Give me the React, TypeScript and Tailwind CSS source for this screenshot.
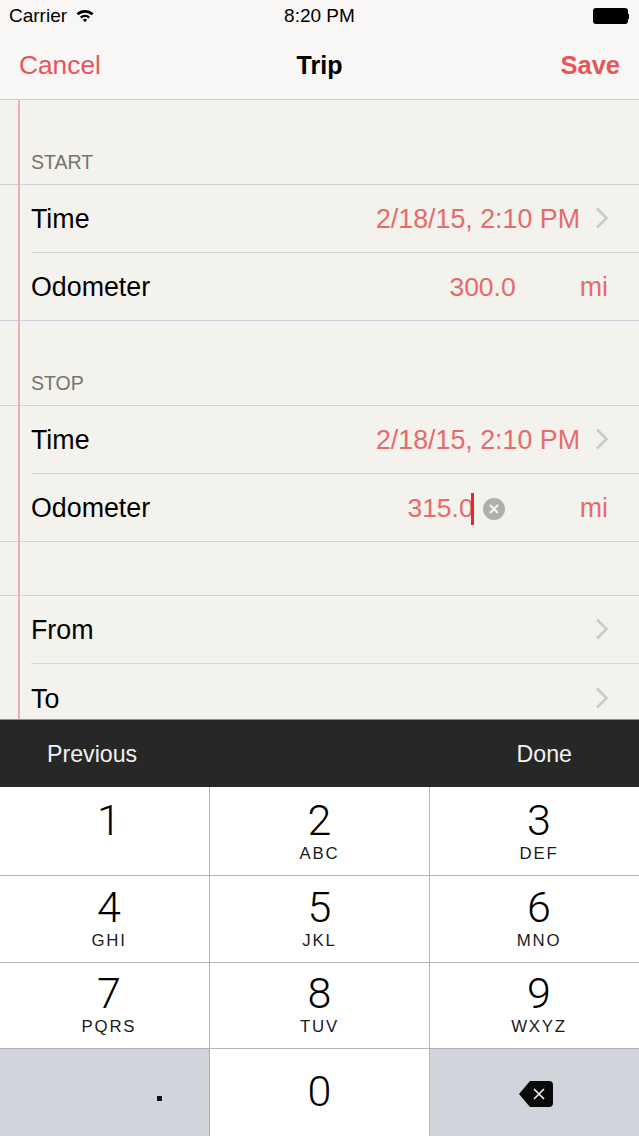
import React from 'react';

function Chevron() {
  return (
    <svg width="14" height="22" viewBox="0 0 14 22" className="shrink-0 -mt-[3px]">
      <path d="M2 1.5 L11.5 11 L2 20.5" fill="none" stroke="#cbcac7" strokeWidth="2.6" />
    </svg>
  );
}

function SectionLabel({ text }: { text: string }) {
  return (
    <div className="flex items-end h-[85px] pl-[31px] pb-[10px] border-b border-[#d3d0de] text-[19.5px] leading-[24px] text-[#75746f]">
      {text}
    </div>
  );
}

function TimeRow({ value }: { value: string }) {
  return (
    <div className="ml-[31px] h-[68px] pt-[2px] flex items-center border-b border-[#d8d6dd] pr-[30px]">
      <span className="text-[26.8px] text-black">Time</span>
      <span className="ml-auto text-[26.8px] text-[#e56b6b]">{value}</span>
      <span className="ml-[15px]"><Chevron /></span>
    </div>
  );
}

function OdometerRow({ children }: { children: React.ReactNode }) {
  return (
    <div className="h-[68px] pt-[2px] flex items-center border-b border-[#d3d0de] pl-[31px] pr-[31px]">
      <span className="text-[26.8px] text-black">Odometer</span>
      {children}
      <span className="text-[26.8px] text-[#e56b6b]">mi</span>
    </div>
  );
}

function LinkRow({ label, line }: { label: string; line: boolean }) {
  return (
    <div className={`ml-[31px] h-[68px] pt-[2px] shrink-0 flex items-center justify-between pr-[30px] ${line ? 'border-b border-[#d8d6dd]' : ''}`}>
      <span className="text-[26.8px] text-black">{label}</span>
      <Chevron />
    </div>
  );
}

function Key({ num, letters, className }: { num: string; letters?: string; className: string }) {
  return (
    <div className={`flex flex-col items-center bg-white border-b border-[#b5b5b8] ${className}`}>
      <span className="text-[43px] leading-[47px] text-black font-['Roboto',sans-serif] font-light">{num}</span>
      <span className="text-[16.8px] leading-[20px] tracking-[1.8px] text-[#1a1a1a]">{letters}</span>
    </div>
  );
}

export default function App() {
  return (
    <div className="w-[639px] h-[1136px] overflow-hidden flex flex-col bg-[#f4f2ec] font-['Liberation_Sans',Arial,sans-serif]">
      {/* Status + nav */}
      <div className="h-[100px] shrink-0 bg-[#f8f7f6] border-b border-[#cfcbd6] flex flex-col">
        <div className="h-[32px] pl-[9px] pr-[10px] flex items-center text-[19px] text-black relative">
          <span>Carrier</span>
          <svg width="20" height="15" viewBox="0 0 18 14" className="ml-[8px] -mt-[2px]">
            <path d="M1 5 A11.5 11.5 0 0 1 17 5 L15.2 6.8 A9 9 0 0 0 2.8 6.8 Z" fill="black" />
            <path d="M4.2 8.2 A7 7 0 0 1 13.8 8.2 L12.2 9.8 A4.6 4.6 0 0 0 5.8 9.8 Z" fill="black" />
            <path d="M7 11 A3 3 0 0 1 11 11 L9 13.2 Z" fill="black" />
          </svg>
          <span className="absolute left-0 right-0 text-center font-medium">8:20 PM</span>
          <div className="ml-auto flex items-center">
            <div className="w-[35px] h-[16px] rounded-[3px] bg-black" />
            <div className="w-[1.5px] h-[5px] bg-black" />
          </div>
        </div>
        <div className="flex-1 flex items-center justify-between pl-[19px] pr-[19px] relative">
          <span className="text-[26.3px] text-[#e5555a]">Cancel</span>
          <span className="absolute left-0 right-0 text-center text-[25px] text-black font-bold">Trip</span>
          <span className="text-[25.5px] text-[#e5555a] font-bold">Save</span>
        </div>
      </div>

      {/* Form */}
      <div className="flex-1 min-h-0 overflow-hidden relative">
        <div className="absolute left-[18px] top-0 bottom-0 w-[2px] bg-[#efaeb0]" />
        <SectionLabel text="START" />
        <TimeRow value="2/18/15, 2:10 PM" />
        <OdometerRow>
          <span className="ml-auto mr-[64px] text-[26.5px] text-[#e56b6b]">300.0</span>
        </OdometerRow>
        <SectionLabel text="STOP" />
        <TimeRow value="2/18/15, 2:10 PM" />
        <OdometerRow>
          <span className="ml-auto text-[26.5px] text-[#e56b6b]">315.0</span>
          <span className="w-[3px] h-[32px] bg-[#e02b36] -ml-[3px]" />
          <svg width="22" height="22" viewBox="0 0 22 22" className="ml-[9px] mr-[75px]">
            <circle cx="11" cy="11" r="11" fill="#b0afac" />
            <path d="M7 7 L15 15 M15 7 L7 15" stroke="#f4f2ec" strokeWidth="2.2" />
          </svg>
        </OdometerRow>
        <div className="h-[54px] border-b border-[#d3d0de]" />
        <LinkRow label="From" line />
        <LinkRow label="To" line={false} />
      </div>

      {/* Accessory bar */}
      <div className="h-[68px] shrink-0 pt-[2px] bg-[#272727] border-t border-[#8e8d8b] flex items-center justify-between pl-[47px] pr-[67px] text-[23.2px] text-[#f2f2f2]">
        <span>Previous</span>
        <span>Done</span>
      </div>

      {/* Keypad */}
      <div className="h-[349px] shrink-0 grid grid-cols-[210px_220px_209px] grid-rows-[89px_87px_86px_87px]">
        <Key num="1" className="pl-[9px] pt-[10px] border-r" />
        <Key num="2" letters="ABC" className="pt-[10px] border-r" />
        <Key num="3" letters="DEF" className="pl-[9px] pt-[10px]" />
        <Key num="4" letters="GHI" className="pl-[9px] pt-[8px] border-r" />
        <Key num="5" letters="JKL" className="pt-[8px] border-r" />
        <Key num="6" letters="MNO" className="pl-[9px] pt-[8px]" />
        <Key num="7" letters="PQRS" className="pl-[9px] pt-[7px] border-r" />
        <Key num="8" letters="TUV" className="pt-[7px] border-r" />
        <Key num="9" letters="WXYZ" className="pl-[9px] pt-[7px]" />
        <div className="bg-[#d1d4da] border-r border-[#a9abb0] flex items-center justify-end pr-[47px] pt-[12px]">
          <span className="w-[5px] h-[5px] bg-[#111]" />
        </div>
        <div className="bg-white border-r border-[#b5b5b8] flex justify-center">
          <span className="text-[43px] leading-[47px] mt-[19px] text-black font-['Roboto',sans-serif] font-light">0</span>
        </div>
        <div className="bg-[#d1d4da] flex items-center justify-center pl-[2px] pt-[3px]">
          <svg width="34" height="26" viewBox="0 0 34 26">
            <path d="M11 0 H30 A4 4 0 0 1 34 4 V22 A4 4 0 0 1 30 26 H11 L0 13 Z" fill="#0a0a0a" />
            <path d="M15 8 L25 18 M25 8 L15 18" stroke="white" strokeWidth="1.5" />
          </svg>
        </div>
      </div>
    </div>
  );
}
